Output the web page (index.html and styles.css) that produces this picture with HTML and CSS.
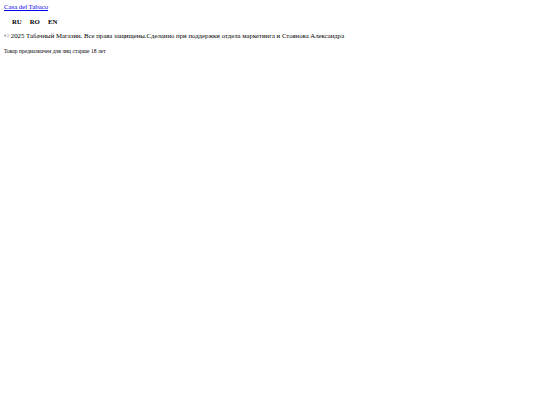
FILE: index.html
```html
<!DOCTYPE html>
<html lang="ru">
<head>
<meta charset="utf-8">
<title>Casa del Tabaco</title>
<link rel="stylesheet" href="styles.css">
</head>
<body>
<header class="site-header">
  <a class="brand" href="#">Casa del Tabaco</a>
  <nav class="langs">
    <span class="lang">RU</span>
    <span class="lang">RO</span>
    <span class="lang">EN</span>
  </nav>
</header>
<footer class="site-footer">
  <p class="copy">© 2025 Табачный Магазин. Все права защищены.Сделанно при поддержки отдела маркетинга и Стоянова Александра</p>
  <p class="age">Товар предназначен для лиц старше 18 лет</p>
</footer>
</body>
</html>
```

FILE: styles.css
```css
html, body {
  margin: 0;
  padding: 0;
  background: #ffffff;
}
body {
  padding: 3px 4px;
  font-family: "Liberation Serif", "Times New Roman", serif;
  font-size: 6.75px;
  line-height: 1.15;
  color: #000;
}
.brand {
  color: #0000ee;
  text-decoration: underline;
}
.langs {
  display: flex;
  gap: 8px;
  padding-left: 8px;
  margin-top: 7px;
  font-weight: bold;
}
.copy {
  margin: 6px 0 0 0;
}
.age {
  margin: 8.5px 0 0 0;
  font-size: 5.6px;
}
```
